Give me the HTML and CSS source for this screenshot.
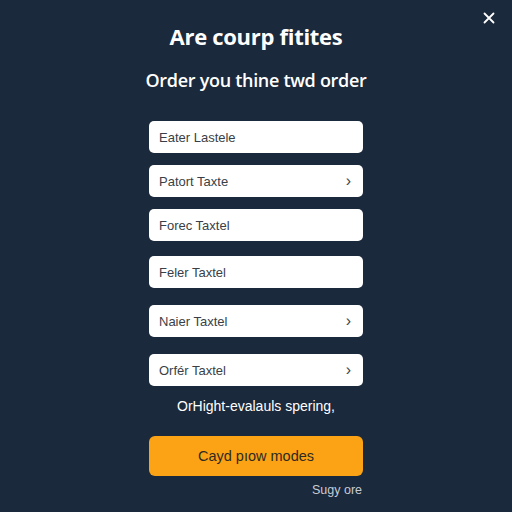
FILE: index.html
```html
<!DOCTYPE html>
<html>
<head>
<meta charset="utf-8">
<link rel="stylesheet" href="styles.css">
</head>
<body>
<div class="page">
  <button class="close" aria-label="Close">
    <svg width="12" height="12" viewBox="0 0 12 12"><path d="M1.5 1.5 L10.5 10.5 M10.5 1.5 L1.5 10.5" stroke="#ffffff" stroke-width="1.8" stroke-linecap="round"/></svg>
  </button>
  <div class="panel">
    <h1 class="title">Are courp fitites</h1>
    <p class="subtitle">Order you thine twd order</p>
    <div class="fields">
      <div class="field"><span>Eater Lastele</span></div>
      <div class="field"><span>Patort Taxte</span><span class="chev">›</span></div>
      <div class="field"><span>Forec Taxtel</span></div>
      <div class="field gap-md"><span>Feler Taxtel</span></div>
      <div class="field gap-lg"><span>Naier Taxtel</span><span class="chev">›</span></div>
      <div class="field gap-lg"><span>Orfér Taxtel</span><span class="chev">›</span></div>
    </div>
    <p class="note">OrHight-evalauls spering,</p>
    <button class="cta">Cayd pıow modes</button>
    <div class="foot">Sugy ore</div>
  </div>
</div>
</body>
</html>
```
FILE: styles.css
```css
html, body {
  margin: 0;
  padding: 0;
  background: #1b293c;
  height: 100%;
}
.page {
  position: relative;
  width: 512px;
  height: 512px;
  font-family: "Liberation Sans", Arial, sans-serif;
}
.close {
  position: absolute;
  top: 12px;
  right: 17px;
  width: 12px;
  height: 12px;
  padding: 0;
  border: 0;
  background: none;
  display: flex;
}
.panel {
  width: 214px;
  margin: 0 auto;
  padding-top: 22px;
  display: flex;
  flex-direction: column;
  align-items: stretch;
}
.title {
  margin: 0;
  font-family: "Open Sans", sans-serif;
  font-weight: 700;
  font-size: 22px;
  line-height: 28px;
  color: #ffffff;
  text-align: center;
  white-space: nowrap;
  letter-spacing: -0.3px;
}
.subtitle {
  margin: 17px -30px 0;
  font-family: "Open Sans", sans-serif;
  font-weight: 600;
  font-size: 18px;
  line-height: 26px;
  color: #ffffff;
  text-align: center;
  white-space: nowrap;
  letter-spacing: -0.3px;
}
.fields {
  margin-top: 28px;
  display: flex;
  flex-direction: column;
  gap: 12px;
}
.field {
  height: 32px;
  background: #ffffff;
  border-radius: 5px;
  display: flex;
  align-items: center;
  justify-content: space-between;
  padding: 0 12px 0 10px;
  font-size: 13px;
  color: #3a3f47;
}
.field.gap-md {
  margin-top: 3px;
}
.field.gap-lg {
  margin-top: 5px;
}
.chev {
  font-size: 16px;
  color: #444;
  line-height: 1;
}
.note {
  margin: 11px 0 0;
  text-align: center;
  color: #ffffff;
  font-size: 14px;
  line-height: 18px;
  white-space: nowrap;
}
.cta {
  margin-top: 21px;
  height: 40px;
  border: 0;
  border-radius: 6px;
  background: #fba314;
  color: #2e2a24;
  font-family: "Liberation Sans", Arial, sans-serif;
  font-size: 14.5px;
}
.foot {
  margin-top: 7px;
  text-align: right;
  color: #c7ccd4;
  font-size: 12.5px;
  line-height: 15px;
  padding-right: 1px;
}
```
